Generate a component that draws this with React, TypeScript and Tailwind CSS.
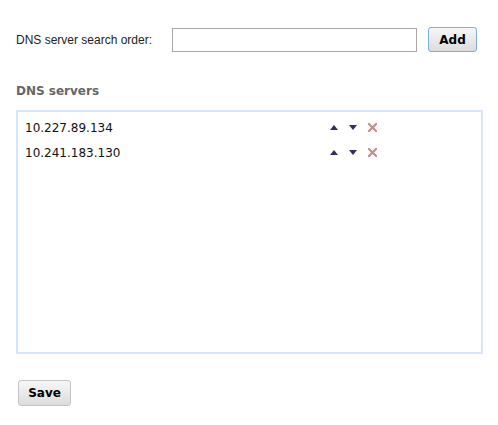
const servers = ["10.227.89.134", "10.241.183.130"];

function UpArrow() {
  return (
    <svg width="8" height="5" viewBox="0 0 8 5" className="block">
      <path d="M4 0 L8 5 L0 5 Z" fill="#2f2f5f" />
    </svg>
  );
}

function DownArrow() {
  return (
    <svg width="8" height="5" viewBox="0 0 8 5" className="block">
      <path d="M0 0 L8 0 L4 5 Z" fill="#2f2f5f" />
    </svg>
  );
}

function RemoveIcon() {
  return (
    <svg width="9" height="9" viewBox="0 0 10 10" className="block">
      <path d="M1 1 L9 9 M9 1 L1 9" stroke="#c98a8a" strokeWidth="2.4" strokeLinecap="square" />
    </svg>
  );
}

export default function App() {
  return (
    <div className="h-[425px] w-[498px] bg-white pl-4 pt-[27px]">
      <div className="flex items-center">
        <label className="w-[156px] font-['Liberation_Sans',Arial,sans-serif] text-[12px] text-[#222]">
          DNS server search order:
        </label>
        <input
          type="text"
          className="h-[24px] w-[245px] border border-[#a9a9a9] bg-white outline-none"
        />
        <button
          type="button"
          className="ml-[11px] h-[25px] w-[49px] rounded-[3px] border border-[#7fa9e8] bg-gradient-to-b from-[#f7f7f7] to-[#dcdcdc] font-['DejaVu_Sans',Verdana,sans-serif] text-[12px] font-bold text-black"
        >
          Add
        </button>
      </div>

      <h2 className="mt-[30px] font-['DejaVu_Sans',Verdana,sans-serif] text-[12px] font-bold text-[#666]">
        DNS servers
      </h2>

      <div className="mt-[10px] h-[244px] w-[467px] border-2 border-[#d8e6fb] pt-[3px] font-['DejaVu_Sans',Verdana,sans-serif] text-[12px] text-[#111]">
        {servers.map((ip) => (
          <div key={ip} className="flex h-[25px] items-center pl-[7px]">
            <span className="w-[305px]">{ip}</span>
            <span className="flex items-center gap-[11px]">
              <UpArrow />
              <DownArrow />
              <RemoveIcon />
            </span>
          </div>
        ))}
      </div>

      <button
        type="button"
        className="ml-[2px] mt-[26px] h-[26px] w-[53px] rounded-[3px] border border-[#c4c4c4] bg-gradient-to-b from-[#f7f7f7] to-[#dcdcdc] font-['DejaVu_Sans',Verdana,sans-serif] text-[12px] font-bold text-black"
      >
        Save
      </button>
    </div>
  );
}
